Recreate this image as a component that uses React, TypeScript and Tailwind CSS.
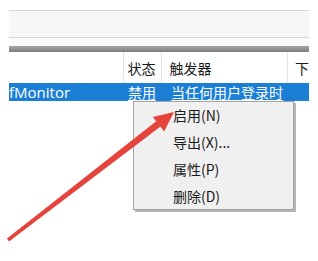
const cjk = '"Noto Sans CJK SC", "Noto Sans", sans-serif'

const menuItems = ['启用(N)', '导出(X)...', '属性(P)', '删除(D)']

export default function App() {
  return (
    <div
      className="relative w-[318px] h-[261px] bg-white overflow-hidden text-[#1a1a1a]"
      style={{ fontFamily: cjk }}
    >
      <div className="ml-[9px] w-[300px] pt-[10px]">
        {/* toolbar strip */}
        <div className="h-[28px] border-t border-b border-[#d6d6d6] bg-[#f7f7f7]" />
        <div className="h-[8px] bg-[#fbfbfb]" />
        {/* splitter */}
        <div className="h-[6px] bg-gradient-to-b from-[#a8a8a8] to-[#7e7e7e]" />

        {/* column header */}
        <div className="flex h-[31px] items-center text-[14px] leading-none">
          <div className="w-[115px] h-full border-r border-[#e3e3e3]" />
          <div className="w-[39px] h-full flex items-center pl-[4px] border-r border-[#e3e3e3]">状态</div>
          <div className="w-[126px] h-full flex items-center pl-[7px] border-r border-[#e3e3e3]">触发器</div>
          <div className="flex-1 h-full flex items-center pl-[7px]">下</div>
        </div>

        {/* selected row */}
        <div className="flex h-[18px] items-center bg-[#1c7fd6] text-white text-[14px] leading-none">
          <div
            className="w-[115px] text-[15px]"
            style={{ fontFamily: '"Open Sans", sans-serif' }}
          >
            fMonitor
          </div>
          <div className="w-[39px] pl-[4px] underline decoration-1 underline-offset-2">禁用</div>
          <div className="pl-[8px] underline decoration-1 underline-offset-2">当任何用户登录时</div>
        </div>
      </div>

      {/* context menu */}
      <div className="absolute left-[133px] top-[101px] w-[161px] h-[109px] bg-[#f0f0f0] border border-[#a3a3a3] shadow-[2px_2px_0_#b5b5b5] flex flex-col pl-[39px] text-[14px] leading-none">
        {menuItems.map(item => (
          <div key={item} className="h-[26.8px] flex items-center">
            {item}
          </div>
        ))}
      </div>

      {/* red arrow */}
      <svg className="absolute left-0 top-0" width="318" height="261" viewBox="0 0 318 261">
        <polygon
          points="9,241.5 7,238.5 156.5,121 160.5,126.5"
          fill="#e4443c"
        />
        <polygon
          points="174,112 152.8,116.9 164.2,131.5"
          fill="#e4443c"
        />
      </svg>
    </div>
  )
}
